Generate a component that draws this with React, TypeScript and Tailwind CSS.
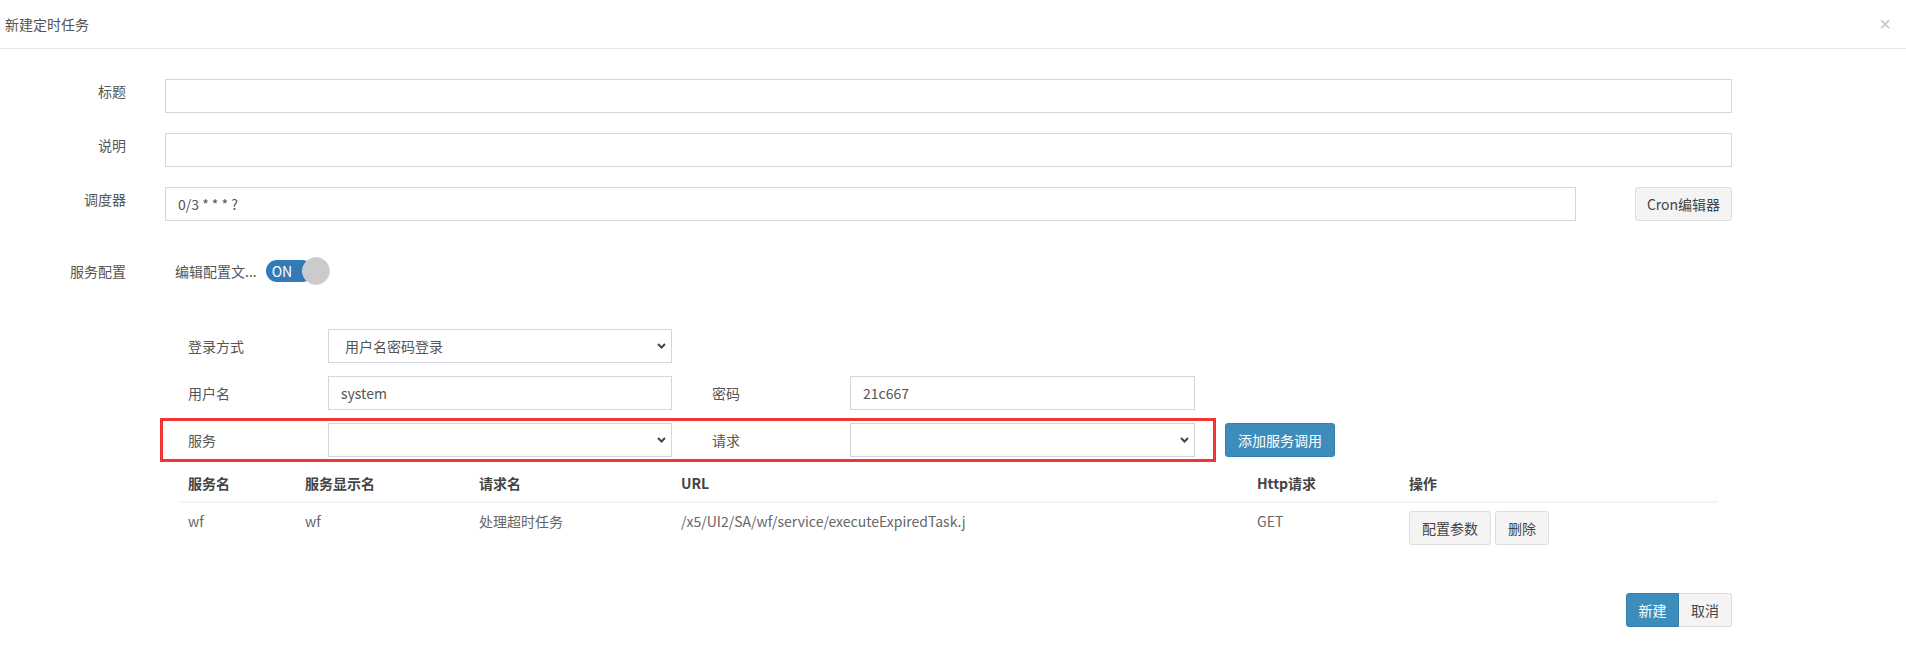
import React from "react";

const inputCls =
  "h-[34px] w-full border border-[#d2d6de] bg-white px-[12px] text-[14px] text-[#555] outline-none";

const btnDefault =
  "h-[34px] rounded-[3px] border border-[#ddd] bg-[#f4f4f4] text-[14px] text-[#444]";

function Chevron() {
  return (
    <svg
      className="pointer-events-none absolute right-[6px] top-1/2 -translate-y-1/2"
      width="9"
      height="6"
      viewBox="0 0 9 6"
    >
      <path d="M1 1 L4.5 4.5 L8 1" fill="none" stroke="#444" strokeWidth="2" />
    </svg>
  );
}

function Select({ value, width }: { value?: string; width: string }) {
  return (
    <div className={`relative h-[34px] ${width}`}>
      <div className="flex h-full items-center border border-[#d2d6de] bg-white pl-[16px] text-[14px] text-[#555]">
        {value}
      </div>
      <Chevron />
    </div>
  );
}

function FormRow({ label, children }: { label: string; children: React.ReactNode }) {
  return (
    <div className="flex h-[34px] items-start">
      <label className="w-[126px] pt-[2px] text-right text-[14px] leading-[20px] text-[#555]">
        {label}
      </label>
      <div className="ml-[39px] flex flex-1 items-start">{children}</div>
    </div>
  );
}

const rows = [
  {
    name: "wf",
    display: "wf",
    req: "处理超时任务",
    url: "/x5/UI2/SA/wf/service/executeExpiredTask.j",
    method: "GET",
  },
];

export default function App() {
  return (
    <div className="h-[648px] w-[1906px] bg-white font-['Noto_Sans_CJK_SC',sans-serif] text-[14px] text-[#555]">
      {/* header */}
      <div className="flex h-[49px] items-center justify-between border-b border-[#e5e5e5] pl-[5px] pr-[15px]">
        <h4 className="text-[14px] text-[#555]">新建定时任务</h4>
        <span className="font-['Liberation_Sans',sans-serif] text-[20px] leading-none text-[#c4c4c4]">
          ×
        </span>
      </div>

      <div className="pr-[174px] pt-[30px]">
        <div className="flex flex-col gap-[20px]">
          <FormRow label="标题">
            <input className={inputCls} />
          </FormRow>
          <FormRow label="说明">
            <input className={inputCls} />
          </FormRow>
          <FormRow label="调度器">
            <input className={`${inputCls} mr-[59px]`} defaultValue="0/3 * * * ?" />
            <button className={`${btnDefault} w-[97px] shrink-0`}>Cron编辑器</button>
          </FormRow>
        </div>

        {/* 服务配置 */}
        <div className="mt-[35px] flex h-[30px] items-center">
          <span className="w-[126px] text-right text-[14px] text-[#555]">服务配置</span>
          <span className="ml-[49px] text-[14px] text-[#555]">编辑配置文...</span>
          <div className="relative ml-[9px] h-[28px] w-[64px]">
            <div className="absolute left-0 top-[3px] flex h-[22px] w-[47px] items-center rounded-full bg-[#337ab7] pl-[6px] text-[14px] leading-none text-white">
              ON
            </div>
            <div className="absolute right-0 top-0 h-[28px] w-[28px] rounded-full border border-[#d4d4d4] bg-[#cbcbcb]" />
          </div>
        </div>
      </div>

      {/* 服务调用 */}
      <div className="mt-[43px] flex flex-col gap-[13px] pl-[188px]">
        <div className="flex h-[34px] items-center">
          <span className="w-[140px]">登录方式</span>
          <Select value="用户名密码登录" width="w-[344px]" />
        </div>
        <div className="flex h-[34px] items-center">
          <span className="w-[140px]">用户名</span>
          <input className={`${inputCls} !w-[344px]`} defaultValue="system" />
          <span className="ml-[40px] w-[138px]">密码</span>
          <input className={`${inputCls} !w-[345px]`} defaultValue="21c667" />
        </div>
        <div className="relative flex h-[34px] items-center">
          <div className="pointer-events-none absolute -left-[28px] -top-[5px] h-[44px] w-[1056px] border-[3px] border-[#f33535]" />
          <span className="w-[140px]">服务</span>
          <Select width="w-[344px]" />
          <span className="ml-[40px] w-[138px]">请求</span>
          <Select width="w-[345px]" />
          <button className="ml-[30px] h-[34px] w-[110px] rounded-[3px] border border-[#367fa9] bg-[#3c8dbc] text-[14px] text-white">
            添加服务调用
          </button>
        </div>
      </div>

      {/* 表格 */}
      <div className="ml-[180px] mt-[8px] w-[1538px]">
        <table className="w-full table-fixed border-collapse text-left">
          <colgroup>
            <col className="w-[117px]" />
            <col className="w-[174px]" />
            <col className="w-[202px]" />
            <col className="w-[576px]" />
            <col className="w-[152px]" />
            <col />
          </colgroup>
          <thead>
            <tr className="border-b-2 border-[#f4f4f4]">
              {["服务名", "服务显示名", "请求名", "URL", "Http请求", "操作"].map((h) => (
                <th key={h} className="px-[8px] py-[8px] text-[14px] font-bold leading-[20px] text-[#444]">
                  {h}
                </th>
              ))}
            </tr>
          </thead>
          <tbody>
            {rows.map((r) => (
              <tr key={r.name} className="align-top">
                <td className="px-[8px] py-[8px] leading-[20px] text-[#666]">{r.name}</td>
                <td className="px-[8px] py-[8px] leading-[20px] text-[#666]">{r.display}</td>
                <td className="px-[8px] py-[8px] leading-[20px] text-[#666]">{r.req}</td>
                <td className="px-[8px] py-[8px] leading-[20px] text-[#666]">{r.url}</td>
                <td className="px-[8px] py-[8px] leading-[20px] text-[#666]">{r.method}</td>
                <td className="px-[8px] py-[8px]">
                  <div className="flex gap-[4px]">
                    <button className={`${btnDefault} w-[82px]`}>配置参数</button>
                    <button className={`${btnDefault} w-[54px]`}>删除</button>
                  </div>
                </td>
              </tr>
            ))}
          </tbody>
        </table>
      </div>

      {/* footer */}
      <div className="mt-[40px] flex justify-end pr-[174px]">
        <button className="h-[34px] w-[53px] rounded-l-[3px] border border-[#367fa9] bg-[#3c8dbc] text-[14px] text-white">
          新建
        </button>
        <button className="h-[34px] w-[53px] rounded-r-[3px] border border-l-0 border-[#ddd] bg-[#f4f4f4] text-[14px] text-[#444]">
          取消
        </button>
      </div>
    </div>
  );
}
